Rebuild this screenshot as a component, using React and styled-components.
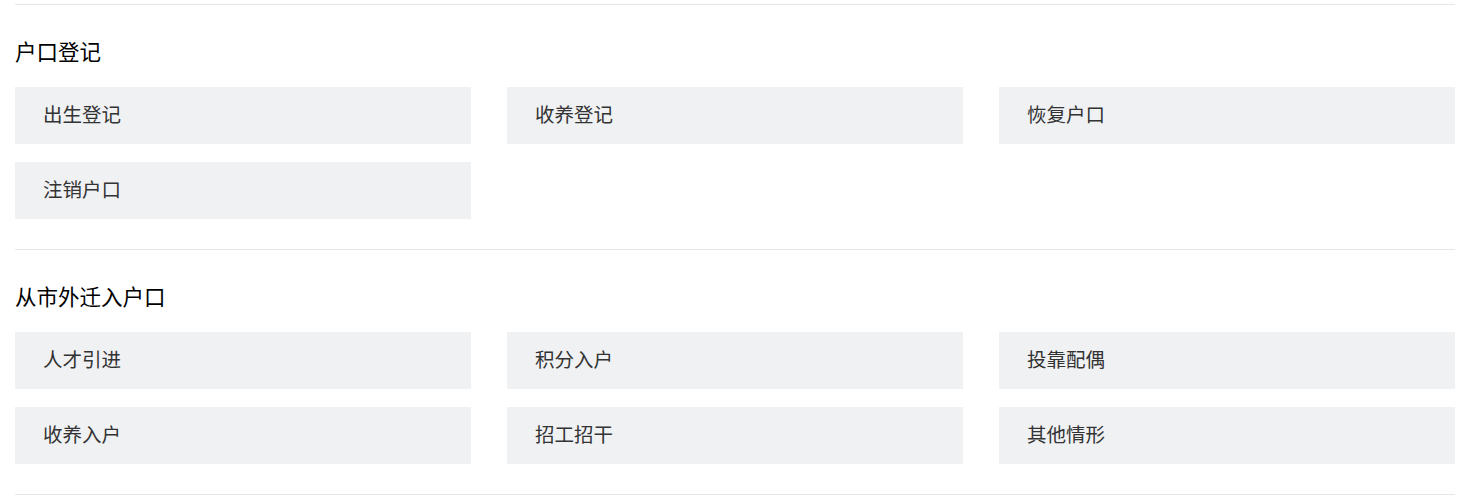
import React from 'react'
import styled, { createGlobalStyle } from 'styled-components'

const GlobalStyle = createGlobalStyle`
  body {
    margin: 0;
    background: #ffffff;
    font-family: "Noto Sans CJK SC", "Microsoft YaHei", sans-serif;
  }
`

const Page = styled.div`
  padding: 4px 13px 0 15px;
`

const Section = styled.section`
  border-top: 1px solid #e6e6e6;
  padding: 32px 0 30px;
  &:last-child {
    border-bottom: 1px solid #e6e6e6;
  }
`

const Title = styled.h3`
  margin: 0 0 22px;
  font-size: 21.5px;
  line-height: 28px;
  font-weight: 400;
  color: #000000;
`

const Grid = styled.div`
  display: grid;
  grid-template-columns: repeat(3, 1fr);
  column-gap: 36px;
  row-gap: 18px;
`

const Item = styled.a`
  display: flex;
  align-items: center;
  box-sizing: border-box;
  height: 57px;
  padding: 0 0 4px 28px;
  background: #f0f1f3;
  font-size: 19.5px;
  color: #333333;
  text-decoration: none;
  cursor: pointer;
`

const sections = [
  { title: '户口登记', items: ['出生登记', '收养登记', '恢复户口', '注销户口'] },
  {
    title: '从市外迁入户口',
    items: ['人才引进', '积分入户', '投靠配偶', '收养入户', '招工招干', '其他情形']
  }
]

export default function App () {
  return (
    <>
      <GlobalStyle />
      <Page>
        {sections.map(s => (
          <Section key={s.title}>
            <Title>{s.title}</Title>
            <Grid>
              {s.items.map(item => (
                <Item key={item}>{item}</Item>
              ))}
            </Grid>
          </Section>
        ))}
      </Page>
    </>
  )
}
